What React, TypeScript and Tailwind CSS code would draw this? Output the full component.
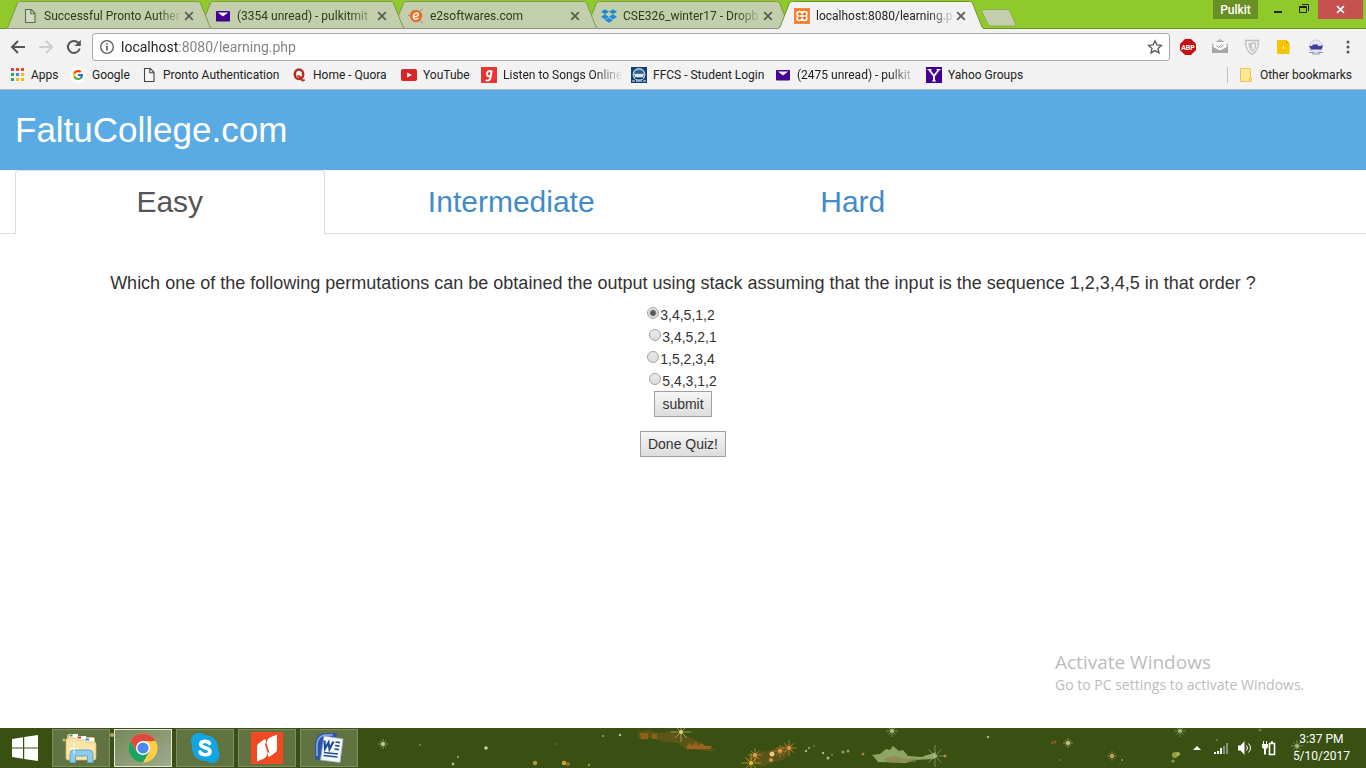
import React, { useState } from "react";
import { FcGoogle } from "react-icons/fc";
import { FaDropbox } from "react-icons/fa";

type IconProps = { className?: string };

const PageIcon = ({ className = "" }: IconProps) => (
  <svg viewBox="0 0 16 16" className={`size-4 shrink-0 ${className}`} fill="none" stroke="currentColor" strokeWidth="1.1">
    <path d="M3.5 1.5h5.8l3.7 3.8v9.2H3.5z" fill="#ffffff" fillOpacity="0.25" />
    <path d="M8.8 1.5v4.3h4.2" />
  </svg>
);

const MailIcon = ({ className = "" }: IconProps) => (
  <svg viewBox="0 0 16 16" className={`size-4 shrink-0 ${className}`}>
    <rect x="1" y="3" width="14" height="10.5" rx="0.8" fill="#400090" />
    <path d="M2.8 4.6h10.4L8 8.6z" fill="#f4effa" />
  </svg>
);

const E2Icon = () => (
  <svg viewBox="0 0 16 16" className="size-4 shrink-0">
    <path d="M0 7.5 4 6.5M12 3l2.5-2.2M12 12l2.5 3.5" stroke="#7d93bd" strokeWidth="1" />
    <circle cx="8" cy="8" r="6.2" fill="#ee6c2b" />
    <path d="M5.2 8.800C8.500 8.800 10.500 8 10.400 6.300 10.200 4.600 7.600 4.400 6.300 6.200 4.700 8.500 5.200 11 7.300 11.200 8.600 11.300 9.600 10.800 10.400 10" fill="none" stroke="#fff" strokeWidth="1.4" />
  </svg>
);

const XamppIcon = () => (
  <svg viewBox="0 0 16 16" className="size-4 shrink-0">
    <rect width="16" height="16" rx="1" fill="#f37623" />
    <rect x="0.8" y="0.8" width="14.4" height="14.4" rx="1" fill="none" stroke="#fbb27d" strokeWidth="0.5" />
    <path
      d="M8 6.200Q8 3.500 5.500 3.500 3 3.500 3 6 3 7.300 4.300 8 3 8.700 3 10 3 12.500 5.500 12.500 8 12.500 8 9.800 8 12.500 10.500 12.500 13 12.500 13 10 13 8.700 11.700 8 13 7.300 13 6 13 3.500 10.500 3.500 8 3.500 8 6.200z"
      fill="none"
      stroke="#fff"
      strokeWidth="1.700"
    />
    <path d="M6 8h4" stroke="#fff" strokeWidth="1.700" />
  </svg>
);

const AppsIcon = () => {
  const fills = ["#ea4335", "#ea4335", "#ea4335", "#34a853", "#4285f4", "#fbbc05", "#34a853", "#fbbc05", "#fbbc05"];
  return (
    <svg viewBox="0 0 16 16" className="size-4 shrink-0">
      {fills.map((fill, i) => (
        <rect key={i} x={2 + (i % 3) * 5} y={1 + Math.floor(i / 3) * 5} width="3" height="3" fill={fill} />
      ))}
    </svg>
  );
};

const QuoraIcon = () => (
  <svg viewBox="0 0 16 16" className="size-4 shrink-0">
    <ellipse cx="8" cy="7.300" rx="4.200" ry="4.800" fill="none" stroke="#b92b27" strokeWidth="2.500" />
    <path d="M6.300 9.300c2.500-.8 3.400 1 4.200 3 .6 1.300 2 1.800 3 .2" fill="none" stroke="#b92b27" strokeWidth="1.900" />
  </svg>
);

const YouTubeIcon = () => (
  <svg viewBox="0 0 16 16" className="size-4 shrink-0">
    <rect y="2" width="16" height="12" rx="2" fill="#d9252a" />
    <path d="M6.200 5.500v5L11 8z" fill="#fff" />
  </svg>
);

const GaanaIcon = () => (
  <svg viewBox="0 0 16 16" className="size-4 shrink-0">
    <rect width="16" height="16" fill="#e93432" />
    <path d="M10.700 3.500 9.300 11.400c-.4 2.200-2.700 2.600-4.500 1.800M10.200 5c-.7-1.600-3.700-1.400-4.100 1.200-.5 3.300 2.400 4 3.700 2" fill="none" stroke="#fff" strokeWidth="1.900" />
  </svg>
);

const VitIcon = () => (
  <svg viewBox="0 0 16 16" className="size-4 shrink-0">
    <rect width="16" height="16" fill="#123f70" />
    <circle cx="8" cy="7.500" r="5.800" fill="#4f789f" stroke="#c3d3e2" strokeWidth="1.200" />
    <path d="M3 7h10l-1.500 3h-7z" fill="#dce7f1" />
    <path d="M4.500 5h7M4 11.500h8" stroke="#123f70" />
    <path d="M1 14h3M12 14h3M5 14h6" stroke="#9db8d1" strokeWidth="1.500" />
  </svg>
);

const YahooIcon = () => (
  <svg viewBox="0 0 16 16" className="size-4 shrink-0">
    <rect width="16" height="16" fill="#410093" />
    <path d="M3 2.500 8 9l5-6.500M8 8.500V14" fill="none" stroke="#fff" strokeWidth="1.900" />
    <path d="M1.500 2.500h4M10.500 2.500h4M6 14h4" stroke="#fff" />
  </svg>
);

const FolderIcon = () => (
  <svg viewBox="0 0 16 16" className="size-4 shrink-0">
    <path d="M2.500 1.500h10v9.500h1v3.500h-11z" fill="#ffe793" stroke="#e8c65c" />
    <path d="M11.500 14.500v-3.500h2" fill="none" stroke="#e8c65c" />
  </svg>
);

const Cross = ({ className = "size-2.5" }: IconProps) => (
  <svg viewBox="0 0 10 10" className={className}>
    <path d="m1.200 1.200 7.600 7.600M8.800 1.200 1.200 8.800" stroke="currentColor" strokeWidth="1.800" />
  </svg>
);

type Tab = { title: string; icon: React.ReactNode; layer: string; active?: boolean };

const tabs: Tab[] = [
  { title: "Successful Pronto Authen", icon: <PageIcon className="text-[#5f6b4a]" />, layer: "z-40" },
  { title: "(3354 unread) - pulkitmit", icon: <MailIcon />, layer: "z-30" },
  { title: "e2softwares.com", icon: <E2Icon />, layer: "z-20" },
  { title: "CSE326_winter17 - Dropb", icon: <FaDropbox className="size-4 shrink-0 text-[#1e8bd6]" />, layer: "z-10" },
  { title: "localhost:8080/learning.p", icon: <XamppIcon />, layer: "z-50", active: true },
];

function BrowserTab({ tab }: { tab: Tab }) {
  return (
    <div className={`relative -mr-[13px] h-[29px] w-[206px] min-w-0 ${tab.layer}`}>
      <svg viewBox="0 0 206 29" preserveAspectRatio="none" className="absolute inset-0 size-full">
        <path
          d="M0 29 2 27 11.500 3Q12.500 1 14.500 1H191.500Q193.500 1 194.500 3L204 27 206 29z"
          fill={tab.active ? "#f2f2f2" : "#c3cfac"}
        />
        <path
          d="M0 28.500 2 27 11.500 3Q12.500 1.500 14.500 1.500H191.500Q193.500 1.500 194.500 3L204 27 206 28.500"
          fill="none"
          stroke={tab.active ? "#6f9427" : "#7d9a48"}
        />
        {!tab.active && <path d="M1 28.500H205" stroke="#8d9380" />}
      </svg>
      <div className="relative flex h-full items-center pt-0.5 pl-4">
        {tab.icon}
        <button
          className={`ml-1.5 w-[136px] text-left whitespace-nowrap mask-[linear-gradient(to_right,black_112px,transparent_140px)] ${tab.active ? "text-[#222]" : "text-[#2f3a1c]"}`}
        >
          {tab.title}
        </button>
        <button aria-label={`Close ${tab.title}`} className="ml-1 text-[#5a5f52]">
          <Cross />
        </button>
      </div>
    </div>
  );
}

type Bookmark = { label: string; icon: React.ReactNode; width: string; fade?: boolean };

const bookmarks: Bookmark[] = [
  { label: "Apps", icon: <AppsIcon />, width: "w-[61px]" },
  { label: "Google", icon: <FcGoogle className="size-4 shrink-0 rounded-full bg-white p-0.5" />, width: "w-[71px]" },
  { label: "Pronto Authentication", icon: <PageIcon className="text-[#444]" />, width: "w-[150px]" },
  { label: "Home - Quora", icon: <QuoraIcon />, width: "w-[110px]" },
  { label: "YouTube", icon: <YouTubeIcon />, width: "w-[80px]" },
  { label: "Listen to Songs Online", icon: <GaanaIcon />, width: "w-[150px]", fade: true },
  { label: "FFCS - Student Login", icon: <VitIcon />, width: "w-[144px]" },
  { label: "(2475 unread) - pulkit", icon: <MailIcon />, width: "w-[151px]", fade: true },
  { label: "Yahoo Groups", icon: <YahooIcon />, width: "w-[110px]" },
];

function BrowserChrome() {
  const [url, setUrl] = useState("localhost:8080/learning.php");
  return (
    <div className="font-[Roboto,'Open_Sans',sans-serif] text-xs text-[#222]">
      <div className="flex h-[29px] items-start justify-between border-b border-[#6c8f2a] bg-[#8fc92a]">
        <div className="flex pl-1.5">
          {tabs.map((tab) => (
            <BrowserTab key={tab.title} tab={tab} />
          ))}
          <button aria-label="New tab" className="ml-2.5 pt-1.5">
            <svg viewBox="0 0 36 18" className="h-[18px] w-9">
              <path d="M2 .500H26Q28 .500 29 2.500L34.500 15Q35 17 33 17H10Q8 17 7 15L1 2.500Q0 .500 2 .500z" fill="#c3cfac" stroke="#8fae50" />
            </svg>
          </button>
        </div>
        <div className="flex items-start pr-[3px]">
          <button className="h-[19px] w-[45px] bg-[#6a8f25] leading-[18px] font-medium text-white">Pulkit</button>
          <button aria-label="Minimize" className="ml-3.5 h-[19px] w-4">
            <svg viewBox="0 0 16 19" className="h-[19px] w-4">
              <path d="M2 12h8" stroke="#222" strokeWidth="2" />
            </svg>
          </button>
          <button aria-label="Restore" className="ml-2.5 h-[19px] w-4">
            <svg viewBox="0 0 16 19" className="h-[19px] w-4" fill="none" stroke="#222">
              <path d="M1.500 6.500h7v6h-7zM1.500 7.500h7M4 4.500h6.500V11" />
            </svg>
          </button>
          <button aria-label="Close" className="ml-1 flex h-[19px] w-[45px] items-center justify-center bg-[#c75050] text-white">
            <Cross className="size-[9px]" />
          </button>
        </div>
      </div>

      <div className="border-b border-[#b6b4b6] bg-[#f2f2f2]">
        <div className="flex h-9 items-center pr-2.5 pl-2.5">
          <button aria-label="Back" className="text-[#555]">
            <svg viewBox="0 0 16 16" className="size-4" fill="none" stroke="currentColor" strokeWidth="2">
              <path d="M15 8H2.500M8 2 2 8l6 6" />
            </svg>
          </button>
          <button aria-label="Forward" className="ml-3 text-[#cfcfcf]">
            <svg viewBox="0 0 16 16" className="size-4" fill="none" stroke="currentColor" strokeWidth="2">
              <path d="M1 8h12.500M8 2l6 6-6 6" />
            </svg>
          </button>
          <button aria-label="Reload" className="ml-3 text-[#555]">
            <svg viewBox="0 0 16 16" className="size-4" fill="none" stroke="currentColor" strokeWidth="2">
              <path d="M13.700 9.500A6 6 0 1 1 12.300 3.800" />
              <path d="M14.800.800v6.200H8.600z" fill="currentColor" stroke="none" />
            </svg>
          </button>
          <div className="ml-2.5 flex h-7 flex-1 items-center rounded-[3px] border border-[#a9a9a9] bg-white px-1.5">
            <svg viewBox="0 0 16 16" className="size-4" fill="none" stroke="#5a5a5a" strokeWidth="1.300">
              <circle cx="8" cy="8" r="6.300" />
              <path d="M8 7v4.500M8 4.200v1.600" strokeWidth="1.700" />
            </svg>
            <input
              aria-label="Address"
              value={url}
              onChange={(e) => setUrl(e.target.value)}
              className="ml-1.5 h-6 flex-1 bg-[linear-gradient(to_right,#222_57px,#808080_57px)] bg-clip-text text-sm text-transparent outline-none"
            />
            <button aria-label="Bookmark this page">
              <svg viewBox="0 0 16 16" className="size-4" fill="none" stroke="#555" strokeWidth="1.300">
                <path d="m8 1.800 1.900 4.100 4.500.5-3.400 3 1 4.500L8 11.600l-4 2.300 1-4.500-3.400-3 4.500-.5z" />
              </svg>
            </button>
          </div>
          <div className="ml-2.5 flex items-center gap-4">
            <button aria-label="Adblock Plus">
              <svg viewBox="0 0 16 16" className="size-4">
                <path d="M5 0h6l5 5v6l-5 5H5l-5-5V5z" fill="#c70d12" />
                <text x="8" y="10.600" textAnchor="middle" fontSize="7" fontWeight="700" fill="#fff">ABP</text>
              </svg>
            </button>
            <button aria-label="Mail tracker">
              <svg viewBox="0 0 16 16" className="size-4">
                <path d="M0 5 8 0l8 5v9H0z" fill="#b5b5b5" />
                <path d="M1.500 3h13v6L8 12 1.500 9z" fill="#fafafa" />
                <path d="M0 14V7.500l8 4 8-4V14z" fill="#a6a6a6" />
                <path d="m4.500 6.500 2 2 3-3M8 8l.8.500 3-3" fill="none" stroke="#999" />
              </svg>
            </button>
            <button aria-label="Shield">
              <svg viewBox="0 0 16 16" className="size-4">
                <path d="M1.500 1.500h13Q15 11 8 15.500 1 11 1.500 1.500z" fill="#f2f2f2" stroke="#bdbdbd" strokeWidth="1.300" />
                <path d="M4.500 4H8v8.500Q4 9.500 4.500 4z" fill="#c6c6c6" />
                <path d="M8 4h3.500Q12 9.500 8 12.500" fill="none" stroke="#c6c6c6" strokeWidth="1.400" />
              </svg>
            </button>
            <button aria-label="Downloads">
              <svg viewBox="0 0 16 16" className="size-4">
                <path d="M1 1h9l3.500 3.500V15H1z" fill="#f6c500" />
                <path d="M10 1v3.500h3.500z" fill="#e0a900" />
                <path d="M7.500 6v4M6 8.500 7.500 10 9 8.500" fill="none" stroke="#fff0a0" />
              </svg>
            </button>
            <button aria-label="Ship">
              <svg viewBox="0 0 16 16" className="size-4">
                <circle cx="8" cy="7.500" r="6.500" fill="#e6e6f0" stroke="#b2b2d2" strokeDasharray="1.500 1" />
                <path d="M1 7h3l1-1.500h5V7l5-.5-1.500 3.500H3z" fill="#3d3da0" />
                <path d="M2 10.500h12M1 13.500h5M10 13.500h5M4 15h8" stroke="#8f8fc4" />
              </svg>
            </button>
            <button aria-label="Menu">
              <svg viewBox="0 0 16 16" className="size-4" fill="#555">
                <circle cx="8" cy="3" r="1.500" />
                <circle cx="8" cy="8" r="1.500" />
                <circle cx="8" cy="13" r="1.500" />
              </svg>
            </button>
          </div>
        </div>
        <nav aria-label="Bookmarks" className="flex h-6 items-start pt-0.5 pr-3.5 pl-[9px]">
          {bookmarks.map((b) => (
            <a key={b.label} href="#" className={`flex items-center gap-1.5 ${b.width}`}>
              {b.icon}
              <span
                className={`whitespace-nowrap ${b.fade ? "w-[120px] mask-[linear-gradient(to_right,black_92px,transparent_120px)]" : ""}`}
              >
                {b.label}
              </span>
            </a>
          ))}
          <a href="#" className="ml-auto flex items-center gap-1.5 border-l border-[#c2c2c2] pl-2.5 whitespace-nowrap">
            <FolderIcon />
            Other bookmarks
          </a>
        </nav>
      </div>
    </div>
  );
}

const levels = ["Easy", "Intermediate", "Hard"];
const options = [
  { value: "3,4,5,1,2", pad: "pr-1" },
  { value: "3,4,5,2,1", pad: "" },
  { value: "1,5,2,3,4", pad: "pr-1" },
  { value: "5,4,3,1,2", pad: "" },
];

const buttonClass =
  "h-[26px] border border-[#a0a0a0] bg-linear-to-b from-[#f6f6f6] to-[#dddddd] px-[7px] text-sm text-[#333]";

function QuizPage() {
  const [level, setLevel] = useState("Easy");
  const [answer, setAnswer] = useState("3,4,5,1,2");
  return (
    <div className="relative flex-1 bg-white font-['Liberation_Sans',Arial,sans-serif] text-[#333]">
      <header className="flex h-20 items-center bg-[#5aabe4] px-[15px]">
        <h1 className="text-[35px] text-white">FaltuCollege.com</h1>
      </header>
      <nav aria-label="Difficulty" className="grid h-16 grid-cols-4 border-b border-[#ddd]">
        {levels.map((name) => (
          <div key={name} className="-mb-px px-[15px]">
            <a
              href="#"
              onClick={() => setLevel(name)}
              className={`mr-0.5 flex h-16 items-center justify-center rounded-t-sm border border-b-0 pb-px text-3xl ${
                level === name ? "border-[#ddd] bg-white text-[#555]" : "border-transparent text-[#428bca]"
              }`}
            >
              {name}
            </a>
          </div>
        ))}
      </nav>
      <main className="flex flex-col items-center pt-[35px]">
        <h2 className="text-center text-lg leading-7">
          Which one of the following permutations can be obtained the output using stack assuming that the input is the
          sequence 1,2,3,4,5 in that order ?
        </h2>
        <form className="mt-1.5 flex flex-col items-center" onSubmit={(e) => e.preventDefault()}>
          {options.map((o) => (
            <label key={o.value} className={`flex h-[22px] items-start text-sm leading-6 ${o.pad}`}>
              <input
                type="radio"
                name="answer"
                checked={answer === o.value}
                onChange={() => setAnswer(o.value)}
                className="mt-1 size-3 appearance-none rounded-full border border-[#a3a3a3] bg-linear-to-b from-[#e9e9e9] to-[#dcdcdc] checked:bg-[radial-gradient(circle,#555_2px,#e6e6e6_4px)]"
              />
              <span className="ml-px">{o.value}</span>
            </label>
          ))}
          <button type="submit" className={buttonClass}>
            submit
          </button>
        </form>
        <button className={`mt-3.5 ${buttonClass}`}>Done Quiz!</button>
      </main>
      <div className="absolute right-14 bottom-8 w-[255px] font-['Open_Sans','Noto_Sans',sans-serif] text-[#bcbcbc]">
        <p className="text-[19px] leading-6">Activate Windows</p>
        <p className="text-sm leading-[22px] whitespace-nowrap">Go to PC settings to activate Windows.</p>
      </div>
    </div>
  );
}

const ExplorerIcon = () => (
  <svg viewBox="0 0 32 32" className="size-8">
    <path d="M2 4q0-2 2-2h8l1 3h15q2 0 2 2v20H2z" fill="#e0bd66" />
    <path d="M4 2h9v5H4zM12 4h9v5h-9zM20 6h9v5h-9z" fill="#fff" />
    <path d="M4.500 2.500h3v2h-3z" fill="#35a844" />
    <path d="M12.500 4.500h3.500v2h-3.500z" fill="#d93a2b" />
    <path d="M20.500 6.500h3.500v2h-3.500z" fill="#2f8be0" />
    <path d="M1 8q0-2 2-2h7l2 2h7l2 2h8q2 0 2 2v14q0 2-2 2H3q-2 0-2-2z" fill="#f8e5a4" stroke="#d8b45c" strokeWidth="0.700" />
    <path d="M5 30.500V22q0-4 4-4h15q4 0 4 4v8.500h-5.500V24h-12v6.500z" fill="#8ccbe9" stroke="#5aa7ce" />
    <path d="M9 11v11M4 16.500h10" stroke="#fff" opacity="0.850" />
  </svg>
);

const ChromeIcon = () => (
  <svg viewBox="0 0 32 32" className="size-8">
    <circle cx="16" cy="16" r="14.500" fill="#ffce43" />
    <path d="M3.440 8.750A14.500 14.500 0 0 0 16 30.500L22.300 19.600 16 16 9.700 19.600z" fill="#1ca261" />
    <path d="M3.440 8.750 9.700 19.600 16 9h12.560A14.500 14.500 0 0 0 3.440 8.750z" fill="#df4a3e" />
    <circle cx="16" cy="16" r="7" fill="#fff" />
    <circle cx="16" cy="16" r="5.600" fill="#4a87ee" />
  </svg>
);

const SkypeIcon = () => (
  <svg viewBox="0 0 32 32" className="size-8">
    <circle cx="16" cy="16" r="13" fill="#12a5e3" />
    <circle cx="10" cy="9" r="8" fill="#12a5e3" />
    <circle cx="22.500" cy="23" r="8" fill="#12a5e3" />
    <path d="M20.500 11.500C19 8.500 11.800 8.500 11.800 12.300c0 4.400 9.200 2.600 9.200 7.200 0 4.200-8.400 4.200-10 .500" fill="none" stroke="#fff" strokeWidth="3.600" strokeLinecap="round" />
  </svg>
);

const NitroIcon = () => (
  <svg viewBox="0 0 32 32" className="size-8">
    <rect width="32" height="32" fill="#f04a21" />
    <path d="M6 29.500V15q0-3 3-4.500l4-3q1.500-1 2 1l.5 3-1.500 1 2.500 8-1 3.500q-1 2-3 2.800z" fill="#fff" />
    <path d="M26 2.500V17q0 3-3 4.500l-4 3q-1.500 1-2-1l-.5-3 1.500-1-2.500-8 1-3.500q1-2 3-2.800z" fill="#fff" />
    <path d="m14.500 11 3.500 10" stroke="#f04a21" strokeWidth="0.900" />
  </svg>
);

const WordIcon = () => (
  <svg viewBox="0 0 32 32" className="size-8">
    <path d="M2 28V11Q3 2 12 1h12l-4 26z" fill="#2c57a8" />
    <path d="M4 24V12q1-8 8-9h8" fill="none" stroke="#8fb1e6" strokeWidth="1.500" />
    <path d="m11 4 19 3-3 23.500L7.500 28z" fill="#f5f8fc" stroke="#a3b4cf" strokeWidth="0.800" />
    <path d="m22.500 10 4.500.6M22 13.500l4.500.6M21.500 17l4.500.6M11 20.500l14 1.500M10.500 23.500l14 1.500" stroke="#234f97" strokeWidth="1.700" />
    <path d="m11.500 8.500.5 8 3.500-6 1 6.500 4-7.500" fill="none" stroke="#234f97" strokeWidth="2.200" />
  </svg>
);

const pinned = [
  { name: "File Explorer", icon: <ExplorerIcon /> },
  { name: "Google Chrome", icon: <ChromeIcon />, active: true },
  { name: "Skype", icon: <SkypeIcon /> },
  { name: "Nitro", icon: <NitroIcon /> },
  { name: "Word", icon: <WordIcon /> },
];

const stars = [
  { x: 383, y: 16, r: 5, c: "#bcd39a" },
  { x: 681, y: 4, r: 10, c: "#e6cf78" },
  { x: 751, y: 35, r: 10, c: "#f2b53c" },
  { x: 755, y: 27, r: 7, c: "#e8a54a" },
  { x: 789, y: 20, r: 8, c: "#e59a48" },
  { x: 780, y: 23, r: 6, c: "#e59a48" },
  { x: 892, y: 3, r: 6, c: "#a9c489" },
  { x: 935, y: 28, r: 11, c: "#9fbd80" },
  { x: 1068, y: 15, r: 5, c: "#c5c68e" },
  { x: 1112, y: 28, r: 5, c: "#c9a465" },
  { x: 1180, y: 3, r: 6, c: "#9fbd80" },
  { x: 1297, y: 18, r: 6, c: "#a9b985" },
];

const specks: [number, number, number, string][] = [
  [112, 7, 2, "#b9a766"], [64, 12, 1.5, "#a9b36a"], [420, 17, 1, "#6f8b50"], [486, 20, 1.8, "#c5d6a6"],
  [458, 29, 1, "#9cb57c"], [453, 36, 1.5, "#a6b98a"], [535, 35, 2.2, "#b39736"], [564, 35, 2.2, "#c9a83a"],
  [568, 36, 2, "#a56a26"], [589, 37, 1.2, "#8c9d4e"], [603, 8, 1, "#90ab72"], [620, 7, 1.2, "#b5c892"],
  [556, 16, 0.8, "#708b4f"], [772, 26, 2.5, "#f0c780"], [771, 32, 2, "#d99048"], [806, 23, 1.2, "#9fbd80"],
  [809, 20, 1, "#9fbd80"], [814, 18, 0.8, "#829f65"], [823, 25, 1.2, "#9fbd80"], [828, 30, 1.5, "#9fbd80"],
  [832, 27, 0.8, "#9fbd80"], [843, 24, 1.6, "#7f9f68"], [848, 23, 1.6, "#7f9f68"], [863, 26, 1.5, "#b97844"],
  [988, 9, 1.2, "#a9b985"], [1052, 15, 1.5, "#8a5a25"], [1055, 14, 1.5, "#8a5a25"], [1122, 32, 1, "#869b55"],
  [1175, 27, 3, "#8fa048"], [1178, 26, 2, "#b3b34e"], [1173, 33, 1.5, "#8c9d4e"], [1260, 2, 1.5, "#6d8340"],
  [945, 28, 1.5, "#b97844"], [1217, 12, 1, "#7a8c55"], [1060, 32, 0.8, "#7a8c55"],
];

const TaskbarLights = () => (
  <svg viewBox="0 0 1366 40" preserveAspectRatio="xMidYMid slice" className="absolute inset-0 size-full">
    <g fill="#7c5a1c" opacity="0.500">
      <path d="M638 4l10-2 10 3 14-2 7 3 10 3 8 4 9 5 10 4-8 1-22-2-8-6-14-1-12-4-10 2-4-3z" />
      <path d="M746 33l8-8 14-2 12-5 10-2 4 5-10 10-12 4-10 4z" />
    </g>
    <path d="M640 5h8v6h-7zM652 6h5v5h-5z" fill="#a5681f" opacity="0.700" />
    <path d="M687 18l3-3 2 3 4-4 2 4 4-3 3 3h7l-2 3h-23z" fill="#a8681f" opacity="0.850" />
    <path d="M872 27l8-1 6-5 4 1 3-4 6 5 4-1 5 6 14 1 14-5-2 7-20 1-8 3-28-1-4-5z" fill="#8fa565" />
    <path d="M884 31l10-3 12 3 10-1v4h-30z" fill="#8f7f4c" opacity="0.600" />
    {specks.map(([x, y, r, fill], i) => (
      <circle key={i} cx={x} cy={y} r={r} fill={fill} />
    ))}
    {stars.map((s) => (
      <g key={s.x} stroke={s.c} strokeWidth="0.800">
        <path
          d={`M${s.x - s.r} ${s.y}h${s.r * 2}M${s.x} ${s.y - s.r}v${s.r * 2}M${s.x - s.r * 0.6} ${s.y - s.r * 0.6}l${s.r * 1.2} ${s.r * 1.2}M${s.x + s.r * 0.6} ${s.y - s.r * 0.6}l${-s.r * 1.2} ${s.r * 1.2}`}
          opacity="0.700"
        />
        <circle cx={s.x} cy={s.y} r="1.500" fill={s.c} />
      </g>
    ))}
  </svg>
);

function Taskbar() {
  return (
    <footer className="relative h-10 bg-[#3a5012] font-[Roboto,'Open_Sans',sans-serif] text-xs text-white">
      <TaskbarLights />
      <div className="relative flex h-full items-center justify-between">
        <div className="flex h-full items-center gap-1">
          <button aria-label="Start" className="flex h-full w-12 items-center justify-center pl-0.5">
            <svg viewBox="0 0 26 26" className="size-[26px]" fill="#fff">
              <path d="M0 4 11 2.300V12.500H0zM12.200 2.100 26 0v12.500H12.200zM0 13.500h11v10.200L0 22zM12.200 13.500H26V26l-13.800-2.100z" />
            </svg>
          </button>
          {pinned.map((p) => (
            <button
              key={p.name}
              aria-label={p.name}
              className={`flex h-[38px] w-[58px] items-center justify-center border ${
                p.active
                  ? "border-[#e3e8da] bg-linear-to-br from-[#76885a] to-[#a0ab8d]"
                  : "border-[#7f8e66] bg-[#ffffff]/20"
              }`}
            >
              {p.icon}
            </button>
          ))}
        </div>
        <div className="flex items-center pr-4">
          <svg viewBox="0 0 8 4" className="mr-3 h-1 w-2">
            <path d="M4 0 8 4H0z" fill="#fff" />
          </svg>
          <svg viewBox="0 0 16 12" className="mr-2 h-3 w-4">
            <path d="M1 10h2v2H1zM4 9h2v3H4zM7 6h2v6H7z" fill="#fff" />
            <path d="M10 4h2v8h-2zM13 1h2v11h-2z" fill="#8a9380" />
          </svg>
          <svg viewBox="0 0 16 14" className="mr-2 h-3.5 w-4">
            <path d="M1 4.500h2.500L7.500 0v14l-4-4.500H1z" fill="#fff" />
            <path d="M9.500 4.500q2 2.500 0 5M11.500 2.500q4 4.500 0 9" fill="none" stroke="#fff" />
          </svg>
          <svg viewBox="0 0 16 16" className="mr-4 size-4">
            <path d="M8.500 3.500h5v11h-5zM10 2h2" fill="none" stroke="#fff" strokeWidth="1.600" />
            <path d="M1 4h6v3.500L5 9v5.500H3V9L1 7.500zM2 1h1v3H2zM5 1h1v3H5z" fill="#fff" />
          </svg>
          <time className="text-center leading-[17px]">
            3:37 PM
            <br />
            5/10/2017
          </time>
        </div>
      </div>
    </footer>
  );
}

export default function App() {
  return (
    <div className="flex min-h-screen flex-col overflow-hidden">
      <BrowserChrome />
      <QuizPage />
      <Taskbar />
    </div>
  );
}
